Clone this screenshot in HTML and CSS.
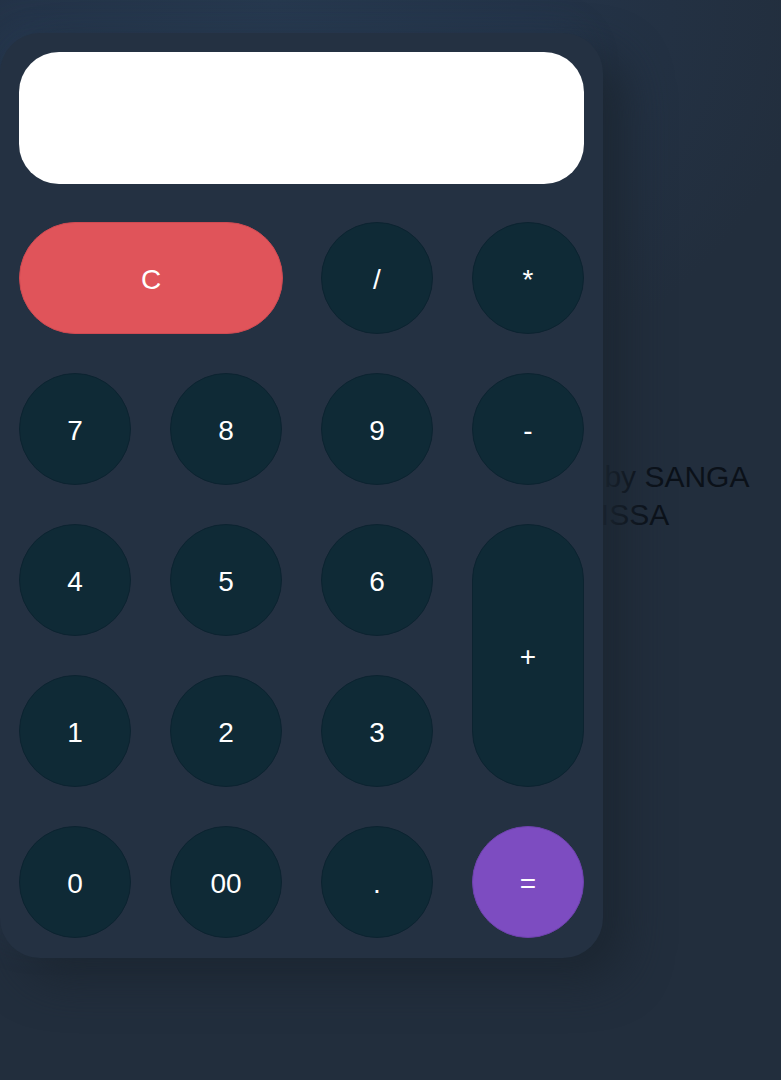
FILE: index.html
```html
<!DOCTYPE html>
<html lang="en">
<head>
<meta charset="utf-8">
<title>Calculator</title>
<link rel="stylesheet" href="styles.css">
</head>
<body>
<div class="page">
  <div class="calculator">
    <div class="display"></div>
    <div class="keys">
      <button class="key key-clear">C</button>
      <button class="key">/</button>
      <button class="key">*</button>
      <button class="key">7</button>
      <button class="key">8</button>
      <button class="key">9</button>
      <button class="key">-</button>
      <button class="key">4</button>
      <button class="key">5</button>
      <button class="key">6</button>
      <button class="key key-plus">+</button>
      <button class="key">1</button>
      <button class="key">2</button>
      <button class="key">3</button>
      <button class="key">0</button>
      <button class="key">00</button>
      <button class="key">.</button>
      <button class="key key-equal">=</button>
    </div>
  </div>
  <p class="credit">Made by SANGA<br>ISSA</p>
</div>
</body>
</html>
```
FILE: styles.css
```css
html, body {
  margin: 0;
  height: 100%;
}
body {
  background: radial-gradient(ellipse 70% 40% at 35% 0%, #27394f 0%, #243449 45%, #222e3d 100%), #222e3d;
  font-family: "Liberation Sans", Arial, sans-serif;
  overflow: hidden;
}
.page {
  display: flex;
  align-items: center;
  padding-top: 33px;
  width: 781px;
  height: 925px;
}
.calculator {
  position: relative;
  z-index: 2;
  flex: none;
  width: 565px;
  padding: 19px 19px 20px 19px;
  background: #243142;
  border-radius: 40px;
  box-shadow: 22px 22px 45px rgba(28, 38, 50, 0.97), -12px -12px 30px rgba(45, 70, 100, 0.2);
}
.display {
  height: 132px;
  background: #ffffff;
  border-radius: 40px;
  margin-bottom: 38px;
}
.keys {
  display: grid;
  grid-template-columns: repeat(4, 112px);
  grid-auto-rows: 112px;
  gap: 39px;
}
.key {
  margin: 0;
  padding: 3px 0 0;
  border: 1px solid #0c2330;
  border-radius: 56px;
  background: #0f2a36;
  color: #ffffff;
  font-family: "Liberation Sans", Arial, sans-serif;
  font-size: 28px;
  cursor: pointer;
}
.key-clear {
  grid-column: span 2;
  width: 264px;
  background: #e0545a;
  border-color: #cf4a52;
}
.key-plus {
  grid-column: 4;
  grid-row: span 2;
}
.key-equal {
  background: #7d4cc1;
  border-color: #6e42ad;
}
.credit {
  position: relative;
  z-index: 1;
  flex: none;
  margin: 0 0 0 -82px;
  width: 228px;
  white-space: nowrap;
  text-align: center;
  font-size: 30px;
  line-height: 38px;
  color: #0b1119;
}
```
